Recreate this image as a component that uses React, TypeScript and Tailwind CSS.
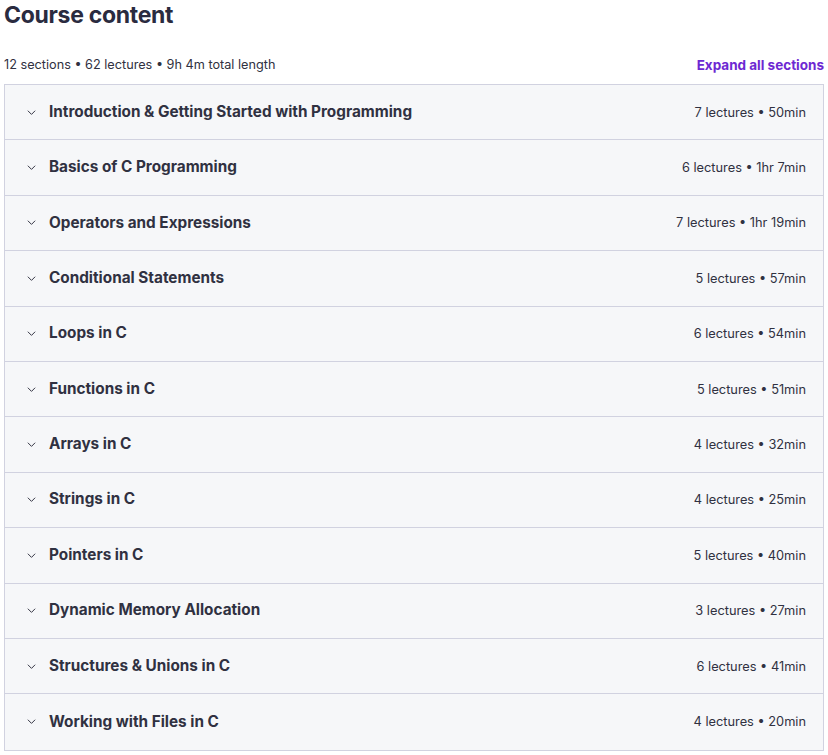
import React from 'react';

interface Section {
  title: string;
  lectures: number;
  length: string;
}

const sections: Section[] = [
  { title: 'Introduction & Getting Started with Programming', lectures: 7, length: '50min' },
  { title: 'Basics of C Programming', lectures: 6, length: '1hr 7min' },
  { title: 'Operators and Expressions', lectures: 7, length: '1hr 19min' },
  { title: 'Conditional Statements', lectures: 5, length: '57min' },
  { title: 'Loops in C', lectures: 6, length: '54min' },
  { title: 'Functions in C', lectures: 5, length: '51min' },
  { title: 'Arrays in C', lectures: 4, length: '32min' },
  { title: 'Strings in C', lectures: 4, length: '25min' },
  { title: 'Pointers in C', lectures: 5, length: '40min' },
  { title: 'Dynamic Memory Allocation', lectures: 3, length: '27min' },
  { title: 'Structures & Unions in C', lectures: 6, length: '41min' },
  { title: 'Working with Files in C', lectures: 4, length: '20min' },
];

const Chevron = () => (
  <svg width="9" height="9" viewBox="0 0 24 24" fill="none" stroke="#303141" strokeWidth="2.6" strokeLinecap="round" strokeLinejoin="round">
    <path d="M3 8l9 9 9-9" />
  </svg>
);

export default function App() {
  return (
    <div className="w-[828px] bg-white pl-1 pr-1 text-[#303141]" style={{ fontFamily: 'Inter, "Noto Sans", sans-serif' }}>
      <h2 className="text-[23px] font-bold leading-[30px] tracking-[-0.3px] text-[#2a2b3f]">Course content</h2>

      <div className="mt-[25px] flex items-center justify-between h-[20px]">
        <span className="text-[12.7px] text-[#303141]">12 sections • 62 lectures • 9h 4m total length</span>
        <button className="text-[13.5px] font-bold text-[#6d28d2]">Expand all sections</button>
      </div>

      <div className="mt-[9px] border border-[#d1d2e0]">
        {sections.map((s, i) => (
          <div
            key={s.title}
            className={`flex items-center justify-between h-[55.4px] bg-[#f6f7f9] pl-[22px] pr-[17px] ${
              i < sections.length - 1 ? 'border-b border-[#d1d2e0]' : ''
            }`}
          >
            <div className="flex items-center gap-[13px]">
              <Chevron />
              <span className="text-[15.3px] font-bold">{s.title}</span>
            </div>
            <span className="text-[12.8px]">
              {s.lectures} lectures • {s.length}
            </span>
          </div>
        ))}
      </div>
    </div>
  );
}
